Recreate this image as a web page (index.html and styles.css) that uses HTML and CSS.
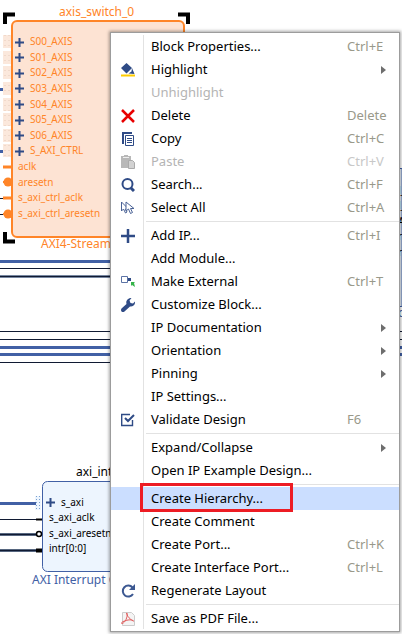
FILE: index.html
```html
<!DOCTYPE html>
<html lang="en">
<head>
<meta charset="utf-8">
<meta name="viewport" content="width=device-width, initial-scale=1">
<title>Block Design</title>
<link rel="stylesheet" href="styles.css">
</head>
<body>
<main class="workspace">
  <svg class="canvas" role="img" aria-label="Block diagram">
    <defs>
      <g id="plus"><path d="M0 4.500h9M4.500 0v9" stroke="#2f4b86" stroke-width="2"/></g>
      <pattern id="pins" width="4" height="5" patternUnits="userSpaceOnUse"><rect width="4" height="5" fill="#fbe8dc"/><rect width="2" height="1" fill="#f0d9cb"/></pattern>
    </defs>
    <g class="wires">
      <path class="bus" d="M0 261.500H402"/>
      <path class="wire" d="M0 268.500H402"/>
      <path d="M0 276.500H402" stroke="#7787a0" stroke-width="3"/><path class="wire" d="M0 276.500H402"/>
      <path class="wire" d="M0 331.500H402M0 339.500H402M0 362.500H110"/>
      <path class="bus" d="M0 347.500H402M0 354.500H402"/>
      <path class="bus" d="M0 89.500H4M0 151.500H4M0 503.500H37"/>
      <path class="wire" d="M0 198.500H4M0 214.500H4M0 519.500H36"/>
      <path d="M0 534.500H38M0 550.500H38" stroke="#56667f" stroke-width="3"/><path class="wire" d="M0 534.500H38M0 550.500H38"/>
    </g>
    <g>
      <path d="M3 35h8v13H3zM3 51h8v13H3zM3 66h8v13H3zM3 82h8v13H3zM3 98h8v13H3zM3 113h8v13H3zM3 129h8v13H3zM3 144h8v13H3z" fill="url(#pins)"/>
      <rect class="block-selected" x="12" y="21" width="172" height="216" rx="5"/>
      <path d="M5 24V14.500H15M178 14.500H188V24M5 232V241.500H15M178 241.500H188V232" fill="none" stroke="#000" stroke-width="4"/>
      <path d="M3 167H12M3 198H12" stroke="#ff8528" stroke-width="3"/>
      <path d="M3 182H7M3 214H7" stroke="#ff8528" stroke-width="2"/>
      <circle cx="8" cy="182" r="4.500" fill="#ff8528"/><circle cx="8" cy="214" r="4.500" fill="#ff8528"/>
      <use href="#plus" x="15" y="38"/><use href="#plus" x="15" y="53"/><use href="#plus" x="15" y="69"/><use href="#plus" x="15" y="84"/><use href="#plus" x="15" y="100"/><use href="#plus" x="15" y="116"/><use href="#plus" x="15" y="131"/><use href="#plus" x="15" y="147"/>
      <g class="port orange">
        <text x="30" y="45">S00_AXIS</text><text x="30" y="61">S01_AXIS</text><text x="30" y="76">S02_AXIS</text><text x="30" y="92">S03_AXIS</text>
        <text x="30" y="108">S04_AXIS</text><text x="30" y="123">S05_AXIS</text><text x="30" y="139">S06_AXIS</text><text x="30" y="154">S_AXI_CTRL</text>
        <text x="18" y="170">aclk</text><text x="18" y="186">aresetn</text><text x="18" y="201">s_axi_ctrl_aclk</text><text x="18" y="217">s_axi_ctrl_aresetn</text>
      </g>
      <g class="title orange"><text x="59" y="16">axis_switch_0</text><text x="41" y="248">AXI4-Stream Switch</text></g>
    </g>
    <g>
      <rect class="block" x="42.500" y="481.500" width="150" height="90" rx="5"/>
      <path d="M35 496h6v14h-6z" fill="#edf5fe"/>
      <path d="M36.500 496V510M39.500 496V510" stroke="#7aa0d0" stroke-dasharray="1 2"/>
      <path d="M0 503.500H36" class="bus"/>
      <path d="M36 519.500H42" stroke="#000" stroke-width="2"/><path d="M36 550.500H42" stroke="#000" stroke-width="4"/>
      <circle cx="39" cy="534" r="2.500" fill="#fff" stroke="#000" stroke-width="1.500"/>
      <use href="#plus" x="46" y="498"/>
      <g class="port"><text x="61" y="506">s_axi</text><text x="49" y="521">s_axi_aclk</text><text x="49" y="537">s_axi_aresetn</text><text x="49" y="552">intr[0:0]</text></g>
      <text class="title" x="76" y="476">axi_intc_0</text>
      <text class="title blue" x="32" y="584">AXI Interrupt Controller</text>
    </g>
    <g>
      <path d="M390 168.500H402V306.500H390" fill="#edf5fe" stroke="#4160a5"/>
      <g class="port"><text x="398" y="194">l_</text><text x="398" y="209">l_</text><text x="398" y="225">A</text><text x="398" y="240">r</text><text x="398" y="256">r</text></g>
      <text class="title blue" x="398" y="317">o</text>
    </g>
  </svg>

  <nav class="menu" aria-label="Block menu">
    <button class="item"><span class="icon"></span><span class="label">Block Properties...</span><kbd>Ctrl+E</kbd></button>
    <button class="item"><span class="icon"><svg viewBox="0 0 14 14"><path d="M0 12.500h14" stroke="#fc0" stroke-width="2"/><path d="M5.500 0 11 5 5.500 10.500 0 5zM11 5l2.500 6-6-.500 3-2z" fill="#2f4b86"/></svg></span><span class="label">Highlight</span><span class="more"></span></button>
    <button class="item" disabled><span class="icon"></span><span class="label">Unhighlight</span></button>
    <button class="item"><span class="icon"><svg viewBox="0 0 14 14"><path d="M1 1 13 13M13 1 1 13" stroke="#e80000" stroke-width="2.500"/></svg></span><span class="label">Delete</span><kbd>Delete</kbd></button>
    <button class="item"><span class="icon"><svg viewBox="0 0 14 14"><path d="M1 0h10v2H3v10H1z" fill="#2f4b86"/><path d="M4.500 3.500h8v10h-8z" fill="#fff" stroke="#2f4b86"/><path d="M6 6.500h5M6 8.500h5M6 10.500h5" stroke="#2f4b86"/></svg></span><span class="label">Copy</span><kbd>Ctrl+C</kbd></button>
    <button class="item" disabled><span class="icon"><svg viewBox="0 0 14 14"><path d="M0 1h3V0h4v1h3v12H0z" fill="#b8b8b8"/><path d="M2 2.500h6" stroke="#eee"/><path d="M7.500 5.500h4l2 2v6h-6z" fill="#d2d2d2" stroke="#aaa"/></svg></span><span class="label">Paste</span><kbd>Ctrl+V</kbd></button>
    <button class="item"><span class="icon"><svg viewBox="0 0 14 14"><circle cx="6.500" cy="6" r="5" fill="none" stroke="#2f4b86" stroke-width="2"/><path d="m10 10 3 3" stroke="#2f4b86" stroke-width="3"/></svg></span><span class="label">Search...</span><kbd>Ctrl+F</kbd></button>
    <button class="item"><span class="icon"><svg viewBox="0 0 14 14" fill="#fff" stroke="#4b6396"><path d="M.5 1v9l2-2 2 4 1.500-1-1.500-3h3z"/><path d="M5 1v9l2.500-2 2 4.500 2-1L9.500 7.500h3.500z"/></svg></span><span class="label">Select All</span><kbd>Ctrl+A</kbd></button>
    <hr>
    <button class="item"><span class="icon"><svg viewBox="0 0 14 14"><path d="M0 7h14M7 0v14" stroke="#2f4b86" stroke-width="2.500"/></svg></span><span class="label">Add IP...</span><kbd>Ctrl+I</kbd></button>
    <button class="item"><span class="icon"></span><span class="label">Add Module...</span></button>
    <button class="item"><span class="icon"><svg viewBox="0 0 14 14"><path d="M.5 1.500h6v6h-6z" fill="#fff" stroke="#5c73a5"/><path d="M7 3h3v3H7z" fill="#2f4b86"/><path d="M10 7h4l-1 1 1 4-3-2-1 1z" fill="#36b44a"/></svg></span><span class="label">Make External</span><kbd>Ctrl+T</kbd></button>
    <button class="item"><span class="icon"><svg viewBox="0 0 14 14"><path d="M10.500 0 8.500 2.500 9.500 5l2.500.500L14 3.500c.5 3-2 5.500-5 5L3.500 13.500Q2 14.500.5 13.500-.5 12 .5 10.500L5.500 6C4.500 2.500 7 0 10.500 0z" fill="#2f4b86"/></svg></span><span class="label">Customize Block...</span></button>
    <button class="item"><span class="icon"></span><span class="label">IP Documentation</span><span class="more"></span></button>
    <button class="item"><span class="icon"></span><span class="label">Orientation</span><span class="more"></span></button>
    <button class="item"><span class="icon"></span><span class="label">Pinning</span><span class="more"></span></button>
    <button class="item"><span class="icon"></span><span class="label">IP Settings...</span></button>
    <button class="item"><span class="icon"><svg viewBox="0 0 14 14" fill="none" stroke="#2f4b86"><path d="M9 1.500H.7v11h10.800V7" stroke-width="1.400"/><path d="m4 5 3 3 6-6" stroke-width="2"/></svg></span><span class="label">Validate Design</span><kbd>F6</kbd></button>
    <hr>
    <button class="item"><span class="icon"></span><span class="label">Expand/Collapse</span><span class="more"></span></button>
    <button class="item"><span class="icon"></span><span class="label">Open IP Example Design...</span></button>
    <hr>
    <button class="item active"><span class="icon"></span><span class="label">Create Hierarchy...</span></button>
    <button class="item"><span class="icon"></span><span class="label">Create Comment</span></button>
    <button class="item"><span class="icon"></span><span class="label">Create Port...</span><kbd>Ctrl+K</kbd></button>
    <button class="item"><span class="icon"></span><span class="label">Create Interface Port...</span><kbd>Ctrl+L</kbd></button>
    <button class="item"><span class="icon"><svg viewBox="0 0 14 14"><path d="M11.500 3.500A5.500 5.500 0 1 0 12 10" fill="none" stroke="#3c5891" stroke-width="2"/><path d="M14 0v6H8z" fill="#3c5891"/></svg></span><span class="label">Regenerate Layout</span></button>
    <hr>
    <button class="item"><span class="icon"><svg viewBox="0 0 14 14" fill="none"><path d="M1.500.5h9l3 3v10h-12z" fill="#f4f4f4" stroke="#ccc"/><path d="M5.500 1c1.500 0 .5 5-1 7.500S.5 12.500.5 11 9 6.500 12 8.500 6.500 7 5.500 1z" stroke="#e25b5b"/></svg></span><span class="label">Save as PDF File...</span></button>
  </nav>
</main>
</body>
</html>
```
FILE: styles.css
```css
*, *::after { box-sizing: border-box; }
body { margin: 0; background: #fff; font-family: "Noto Sans", sans-serif; }
.workspace { position: relative; min-height: 100vh; padding: 32px 2px 2px 110px; overflow: hidden; }
.canvas { position: absolute; inset: 0; width: 100%; height: 100%; }
.wire { stroke: #101a33; stroke-width: 1; }
.bus { stroke: #4160a5; stroke-width: 3; }
.block { fill: #edf5fe; stroke: #4160a5; }
.block-selected { fill: #fde3d3; stroke: #ff8528; stroke-width: 2; }
.port { font-size: 10px; }
.title { font-size: 12px; }
.orange { fill: #ff8528; }
.blue { fill: #4160a5; }

.menu {
  position: relative;
  display: flex;
  flex-direction: column;
  padding: 2px 0 1px;
  background: linear-gradient(#e2e2e2, #e2e2e2) 32px 2px / 1px calc(100% - 4px) no-repeat #fff;
  border: 1px solid #9c9c9c;
  box-shadow: 0 0 3px 1px rgba(0, 0, 0, .35);
}
.item {
  display: flex;
  align-items: center;
  height: 23px;
  margin: 0;
  padding: 0 11px 0 10px;
  border: 0;
  background: none;
  color: #000;
  font: 13px/18px "Noto Sans", sans-serif;
  text-align: left;
  white-space: nowrap;
}
.item:disabled { color: #b4b4b4; }
.item.active { position: relative; z-index: 1; background: #cbdeff; }
.item.active::after { content: ""; position: absolute; left: 29px; top: -4px; width: 153px; height: 29px; border: 3px solid #ed1c24; }
.icon { flex: none; width: 14px; height: 14px; margin-right: 16px; }
.icon svg { display: block; width: 14px; height: 14px; }
.label, kbd { padding-bottom: 2px; }
.label { flex: 1; }
kbd { width: 41px; color: #99998a; font: inherit; }
.item:disabled kbd { color: #c8c8c8; }
.more { margin-right: 2px; border-left: 5px solid #6e6e6e; border-top: 4px solid transparent; border-bottom: 4px solid transparent; }
hr { flex: none; width: auto; height: 1px; margin: 2px 0 2px 35px; border: 0; background: #e2e2e2; }
```
